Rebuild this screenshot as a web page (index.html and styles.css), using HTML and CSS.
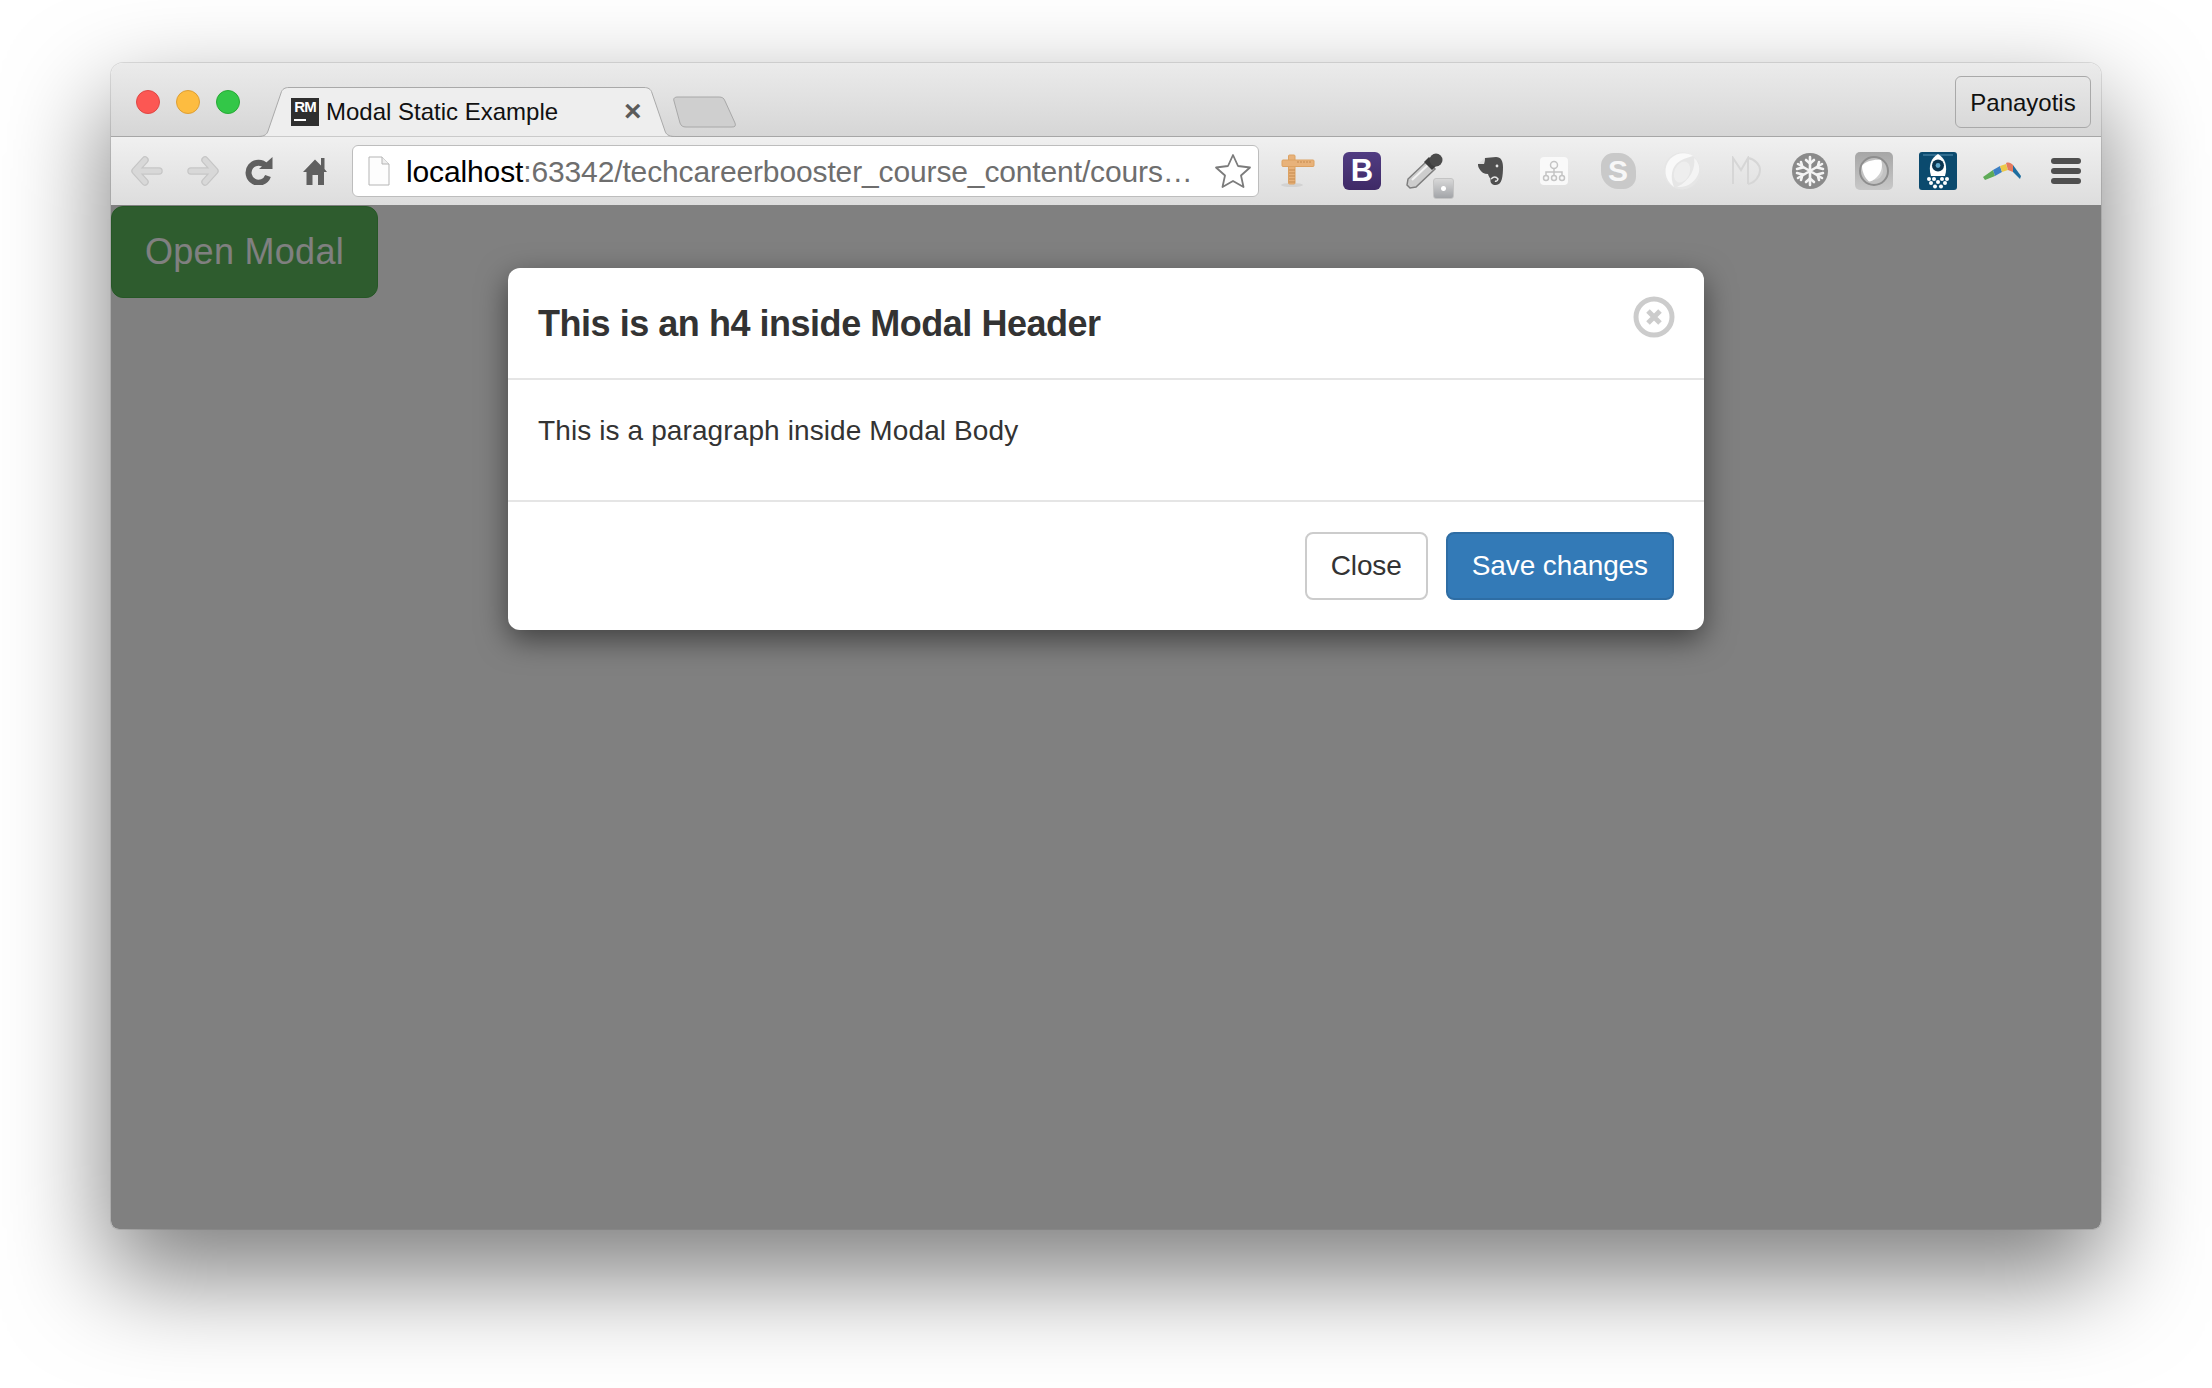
FILE: index.html
```html
<!DOCTYPE html>
<html lang="en">
<head>
    <meta charset="UTF-8">
    <meta name="viewport" content="width=device-width, initial-scale=1.0">
    <title>Modal Static Example</title>
    <link rel="stylesheet" href="styles.css">
</head>
<body>
    <div class="window">
        <div class="tabstrip">
            <div class="lights">
                <span class="light light-red"></span>
                <span class="light light-yellow"></span>
                <span class="light light-green"></span>
            </div>
            <div class="tab">
                <svg class="tab-shape" viewBox="0 0 417 50" preserveAspectRatio="none">
                    <path d="M0 49.5 C7 49.5 9 47 10 44 L23 6 C24 2 27 .5 31 .5 L386 .5 C390 .5 393 2 394 6 L407 44 C408 47 410 49.5 417 49.5" fill="#eeeeee" stroke="#a9a9a9"/>
                </svg>
                <span class="favicon"><span class="favicon-text">RM</span><span class="favicon-bar"></span></span>
                <span class="tab-title">Modal Static Example</span>
                <span class="tab-close">×</span>
            </div>
            <svg class="newtab" width="64" height="32" viewBox="0 0 64 32">
                <path d="M1 5 C0 2 2 1 5 1 L46 1 C49 1 51 2 52 5 L62 27 C63 30 62 31 59 31 L13 31 C10 31 8 30 7 27 Z" fill="#cfcfcf" stroke="#a8a8a8"/>
            </svg>
            <div class="profile">Panayotis</div>
        </div>

        <div class="toolbar">
            <div class="nav-slot">
                <svg width="32" height="30" viewBox="0 0 32 30"><path d="M14 4 L4 15 L14 26 M5 15 L28 15" fill="none" stroke="#c6c6c6" stroke-width="7.500" stroke-linecap="round" stroke-linejoin="round"/><path d="M14 4 L4 15 L14 26 M5 15 L28 15" fill="none" stroke="#d8d8d8" stroke-width="5" stroke-linecap="round" stroke-linejoin="round"/></svg>
            </div>
            <div class="nav-slot">
                <svg width="32" height="30" viewBox="0 0 32 30"><path d="M18 4 L28 15 L18 26 M27 15 L4 15" fill="none" stroke="#c6c6c6" stroke-width="7.500" stroke-linecap="round" stroke-linejoin="round"/><path d="M18 4 L28 15 L18 26 M27 15 L4 15" fill="none" stroke="#d8d8d8" stroke-width="5" stroke-linecap="round" stroke-linejoin="round"/></svg>
            </div>
            <div class="nav-slot">
                <svg width="28" height="28" viewBox="0 0 28 28"><path d="M21 9 A10 10 0 1 0 23 19" fill="none" stroke="#5f5f5f" stroke-width="6"/><path d="M14 12 L27.500 12 L27.500 0 Z" fill="#5f5f5f"/></svg>
            </div>
            <div class="nav-slot">
                <svg width="24" height="27" viewBox="0 0 24 27"><path d="M12 1.500 L18 7.500 L18 0 L21.500 0 L21.500 11 L24 14 L21 14 L21 27 L15 27 L15 17 L9.500 17 L9.500 27 L3.500 27 L3.500 14 L0 14 Z" fill="#5f5f5f"/></svg>
            </div>

            <div class="omnibox">
                <svg class="doc-icon" width="22" height="30" viewBox="0 0 22 30"><path d="M1 1 L14 1 L21 8 L21 29 L1 29 Z" fill="#fdfdfd" stroke="#b5b5b5"/><path d="M14 1 L14 8 L21 8" fill="#eeeeee" stroke="#b5b5b5"/></svg>
                <span class="url"><span class="url-host">localhost</span>:63342/techcareerbooster_course_content/cours…</span>
                <svg class="star" width="38" height="36" viewBox="0 0 38 36"><path d="M19 2 L24 13 L36 14.5 L27 22.500 L29.500 34 L19 28 L8.500 34 L11 22.500 L2 14.500 L14 13 Z" fill="#ffffff" stroke="#7c7c7c" stroke-width="1.800" stroke-linejoin="round"/></svg>
            </div>

            <div class="ext-slot">
                <svg width="34" height="34" viewBox="0 0 34 34"><ellipse cx="11" cy="31" rx="11" ry="2" fill="#d2d2d2"/><rect x="7.500" y="1" width="6.500" height="29" rx="1" fill="#e8b27a" stroke="#dca263"/><rect x="1" y="6" width="32" height="6.500" rx="1" fill="#e8b27a" stroke="#dca263"/><path d="M8 16h6M8 19h6M8 22h6M8 25h6M8 28h6M17 9v-2M20 9v-2M23 9v-2M26 9v-2M29 9v-2" stroke="#c58a4e"/></svg>
            </div>
            <div class="ext-slot">
                <span class="bootstrap-icon">B</span>
            </div>
            <div class="ext-slot ext-dropper">
                <svg width="38" height="36" viewBox="0 0 38 36"><path d="M1 32 L2 26 L21 8 L29 16 L10 34 L4 35 Z" fill="#cdcdcd" stroke="#7e7e7e" stroke-width="1.500"/><path d="M6 27 L22 12" stroke="#f2f2f2" stroke-width="2"/><path d="M18 9 L23 4 L31 12 L26 17 Z" fill="#3e3e3e"/><circle cx="30" cy="7" r="6.500" fill="#4a4a4a"/></svg>
                <span class="dropper-badge"></span>
            </div>
            <div class="ext-slot">
                <svg width="25" height="28" viewBox="0 0 25 28"><path d="M7 1 L18 0 C23 0 25 4 25 10 C25 19 24 28 18 28 C14 28 12 26 12.500 22 C11 20 10.500 18.500 10 17 C6 17 3 15 1.500 12 C0 10 0 8 0 7 L6 7 Z" fill="#4f4f4f"/><path d="M7 1 L0 7 L6 7 Z" fill="#dddddd"/><circle cx="19" cy="9" r="1.400" fill="#e6e6e6"/><path d="M13 22 Q17 18 20 22 Q19 25 17 24" fill="none" stroke="#e6e6e6" stroke-width="1.400"/></svg>
            </div>
            <div class="ext-slot">
                <svg width="28" height="28" viewBox="0 0 28 28"><rect width="28" height="28" rx="4" fill="#f9f9f9"/><g fill="none" stroke="#c4c4c4" stroke-width="1.500"><circle cx="14" cy="8" r="3.500"/><circle cx="6" cy="21" r="2.500"/><circle cx="14" cy="21" r="2.500"/><circle cx="22" cy="21" r="2.500"/><path d="M14 12v7M6 18v-3h16v3"/></g></svg>
            </div>
            <div class="ext-slot">
                <span class="skype-icon">S</span>
            </div>
            <div class="ext-slot">
                <svg width="38" height="38" viewBox="0 0 38 38"><circle cx="19" cy="19" r="18.500" fill="#e6e6e6"/><ellipse cx="19" cy="20" rx="7.500" ry="11" transform="rotate(25 19 20)" fill="#eeeeee"/><path d="M30 4 C24 0 14 0 7 7 C0 15 1 28 11 35 C7 26 8 14 17 9 C22 6 27 5 30 4 Z" fill="#f9f9f9"/><path d="M14 35 C24 36 33 30 36 20 C37 14 35 9 31 6 C33 16 27 29 14 35 Z" fill="#f4f4f4"/></svg>
            </div>
            <div class="ext-slot">
                <svg width="30" height="30" viewBox="0 0 30 30"><path d="M2 28 L2 2 L10 14 L17 2 L17 28 M17 2 C24 3 29 9 29 14 C29 20 24 27 17 28" fill="none" stroke="#d6d6d6" stroke-width="2"/></svg>
            </div>
            <div class="ext-slot">
                <svg width="36" height="36" viewBox="0 0 36 36"><circle cx="18" cy="18" r="18" fill="#8a8a8a"/><g stroke="#f4f4f4" stroke-width="2.600" stroke-linecap="round" fill="none"><path d="M18 4 V32 M6 11 L30 25 M6 25 L30 11"/><path d="M14 7 L18 10.500 L22 7 M14 29 L18 25.500 L22 29 M5 16 L10.500 14.500 L9 9 M31 16 L25.500 14.500 L27 9 M5 20 L10.500 21.500 L9 27 M31 20 L25.500 21.500 L27 27"/></g></svg>
            </div>
            <div class="ext-slot">
                <svg width="38" height="38" viewBox="0 0 38 38"><defs><linearGradient id="shield-bg" x1="0" y1="0" x2="0" y2="1"><stop offset="0" stop-color="#a6a6a6"/><stop offset="1" stop-color="#c8c8c8"/></linearGradient></defs><rect width="38" height="38" rx="5" fill="url(#shield-bg)"/><circle cx="19" cy="19" r="14" fill="#c2c2c2" stroke="#8e8e8e" stroke-width="2"/><circle cx="19" cy="19" r="9" fill="#d0d0d0"/><path d="M7 14 C10 9 20 7 26 8 C28 13 27 20 22 25 C19 28 16 29.500 14 29.500 C10 26 7 20 7 14 Z" fill="#ffffff"/></svg>
            </div>
            <div class="ext-slot">
                <svg width="38" height="38" viewBox="0 0 38 38"><rect width="38" height="38" rx="3" fill="#0b4a6e"/><path d="M4 3h30" stroke="#3e7a9c" stroke-width="1.500"/><path d="M19 2 C26 6 29 14 26 24 L12 24 C9 14 12 6 19 2 Z" fill="#ffffff"/><circle cx="19" cy="13.500" r="6" fill="#0b3550"/><circle cx="19" cy="13.500" r="2.400" fill="#5fa7cb"/><g fill="#ffffff"><circle cx="10" cy="27" r="2"/><circle cx="15" cy="27" r="2"/><circle cx="23" cy="27" r="2"/><circle cx="28" cy="27" r="2"/><circle cx="12" cy="31" r="2"/><circle cx="19" cy="30" r="2"/><circle cx="26" cy="31" r="2"/><circle cx="16" cy="34.500" r="2"/><circle cx="22" cy="34.500" r="2"/></g></svg>
            </div>
            <div class="ext-slot">
                <svg width="40" height="20" viewBox="0 0 40 20"><path d="M1 16 L11 9 L13 15 L3 19 Z" fill="#5eab57"/><path d="M11 9 L18 5 L20 11 L13 15 Z" fill="#3c7fc4"/><path d="M18 5 L24 3 L26 9 L20 11 Z" fill="#ecc94a"/><path d="M24 2 C27 1 29 2 31 4 L31 11 L26 9 Z" fill="#e57a5f"/><path d="M31 4 L39 15 L38 18 L31 11 Z" fill="#1d6d9f"/></svg>
            </div>
            <div class="ext-slot">
                <span class="menu-icon"><span></span><span></span><span></span></span>
            </div>
        </div>

        <div class="content">
            <a class="open-btn">Open Modal</a>

            <div class="backdrop">
                <div class="modal">
                    <div class="modal-header">
                        <h4>This is an h4 inside Modal Header</h4>
                        <svg class="modal-close" width="42" height="42" viewBox="0 0 42 42"><circle cx="21" cy="21" r="18" fill="none" stroke="#cccccc" stroke-width="5"/><path d="M15 15 L27 27 M27 15 L15 27" stroke="#cccccc" stroke-width="5"/></svg>
                    </div>
                    <div class="modal-body">
                        <p>This is a paragraph inside Modal Body</p>
                    </div>
                    <div class="modal-footer">
                        <a class="btn btn-default">Close</a>
                        <a class="btn btn-primary">Save changes</a>
                    </div>
                </div>
            </div>
        </div>
    </div>
</body>
</html>
```

FILE: styles.css
```css
html, body {
    height: 100%;
}
body {
    margin: 0;
    background: #ffffff;
    font-family: "Liberation Sans", Arial, sans-serif;
    overflow: hidden;
    padding: 63px 111px 0;
    box-sizing: border-box;
}

.window {
    width: 1990px;
    height: 1166px;
    display: flex;
    flex-direction: column;
    border-radius: 12px 12px 8px 8px;
    box-shadow: 0 44px 100px 4px rgba(0, 0, 0, 0.5), 0 0 0 1px rgba(0, 0, 0, 0.1);
    overflow: hidden;
}

/* tab strip */
.tabstrip {
    height: 73px;
    flex: none;
    display: flex;
    align-items: flex-end;
    background: linear-gradient(#ebebeb, #d6d6d6);
    border-top: 1px solid #c4c4c4;
    border-bottom: 1px solid #a6a6a6;
    box-sizing: content-box;
    margin-top: -1px;
}
.lights {
    align-self: flex-start;
    display: flex;
    gap: 16px;
    margin: 27px 0 0 25px;
}
.light {
    width: 24px;
    height: 24px;
    border-radius: 50%;
    box-sizing: border-box;
}
.light-red { background: #fc5753; border: 1px solid #df4744; }
.light-yellow { background: #fdbc40; border: 1px solid #de9f34; }
.light-green { background: #33c748; border: 1px solid #27aa35; }

.tab {
    position: relative;
    width: 417px;
    height: 50px;
    margin: 0 0 -1px 18px;
    display: flex;
    align-items: center;
    padding-left: 33px;
    box-sizing: border-box;
}
.tab-shape {
    position: absolute;
    left: 0;
    top: 0;
    width: 100%;
    height: 100%;
}
.favicon {
    position: relative;
    flex: none;
    width: 28px;
    height: 28px;
    background: #2f2f2f;
    color: #ffffff;
    margin-top: -1px;
}
.favicon-text {
    display: block;
    font-size: 15px;
    font-weight: 700;
    line-height: 17px;
    letter-spacing: -1px;
    text-align: center;
}
.favicon-bar {
    display: block;
    width: 12px;
    height: 2px;
    background: #ffffff;
    margin: 4px 0 0 3px;
}
.tab-title {
    position: relative;
    font-size: 24px;
    color: #111111;
    margin-left: 7px;
    white-space: nowrap;
    margin-top: -1px;
}
.tab-close {
    position: absolute;
    left: 366px;
    top: 8px;
    font-size: 30px;
    line-height: 32px;
    font-weight: 700;
    color: #5a5a5a;
}
.newtab {
    flex: none;
    margin: 0 0 8px -2px;
}
.profile {
    align-self: flex-start;
    margin: 13px 10px 0 auto;
    width: 136px;
    height: 52px;
    line-height: 52px;
    text-align: center;
    font-size: 24px;
    color: #111111;
    border: 1px solid #a9a9a9;
    border-radius: 6px;
    box-sizing: border-box;
}

/* toolbar */
.toolbar {
    height: 68px;
    flex: none;
    display: flex;
    align-items: center;
    padding-left: 8px;
    background: linear-gradient(#f0f0f0, #dddddd);
    box-sizing: border-box;
}
.nav-slot {
    width: 56px;
    flex: none;
    display: flex;
    justify-content: center;
}
.omnibox {
    width: 907px;
    height: 52px;
    flex: none;
    margin: 0 7px 0 9px;
    display: flex;
    align-items: center;
    background: #ffffff;
    border: 1px solid #bdbdbd;
    border-radius: 6px;
    box-sizing: border-box;
}
.doc-icon {
    flex: none;
    margin-left: 15px;
}
.url {
    margin: 2px 0 0 16px;
    font-size: 30px;
    letter-spacing: -0.13px;
    color: #6e6e6e;
    white-space: nowrap;
    flex: 1;
}
.url-host {
    color: #000000;
}
.star {
    flex: none;
    margin-right: 6px;
}
.ext-slot {
    position: relative;
    width: 64px;
    height: 40px;
    flex: none;
    display: flex;
    align-items: center;
    justify-content: center;
}
.bootstrap-icon {
    width: 38px;
    height: 38px;
    border-radius: 6px;
    background: linear-gradient(#513c82, #3f2a66);
    color: #ffffff;
    font-size: 31px;
    font-weight: 700;
    line-height: 38px;
    text-align: center;
}
.ext-dropper svg {
    margin-left: -2px;
}
.dropper-badge {
    position: absolute;
    left: 39px;
    top: 27px;
    width: 21px;
    height: 21px;
    border-radius: 3px;
    background: radial-gradient(circle, #ffffff 2px, transparent 3px), linear-gradient(#d8d8d8, #a2a4a8);
    border: 1px solid #c4c4c4;
    box-sizing: border-box;
}
.skype-icon {
    width: 35px;
    height: 36px;
    border-radius: 35% 50% 35% 50%;
    background: #c9c9c9;
    color: #f7f7f7;
    font-size: 30px;
    font-weight: 700;
    line-height: 36px;
    text-align: center;
}
.menu-icon {
    display: flex;
    flex-direction: column;
    gap: 4px;
    width: 30px;
}
.menu-icon span {
    height: 6px;
    border-radius: 3px;
    background: #4f4f4f;
}

/* page inside the window */
.content {
    position: relative;
    flex: 1;
    background: #ffffff;
}
.open-btn {
    display: inline-block;
    width: 267px;
    height: 92px;
    margin-top: 1px;
    line-height: 90px;
    text-align: center;
    font-size: 36px;
    letter-spacing: 0.3px;
    color: #ffffff;
    background: #5cb85c;
    border: 1px solid #4cae4c;
    border-radius: 12px;
    box-sizing: border-box;
}
.backdrop {
    position: absolute;
    left: 0;
    top: 0;
    right: 0;
    bottom: 0;
    background: rgba(0, 0, 0, 0.497);
    display: flex;
    justify-content: center;
    align-items: flex-start;
}
.modal {
    width: 1196px;
    margin-top: 63px;
    background: #ffffff;
    border-radius: 12px;
    box-shadow: 0 10px 30px rgba(0, 0, 0, 0.5);
}
.modal-header {
    height: 112px;
    padding: 0 30px;
    display: flex;
    justify-content: space-between;
    align-items: flex-start;
    border-bottom: 2px solid #e5e5e5;
    box-sizing: border-box;
}
.modal-header h4 {
    margin: 36px 0 0;
    font-size: 36px;
    line-height: 40px;
    font-weight: 700;
    letter-spacing: -0.47px;
    color: #333333;
}
.modal-close {
    margin: 28px -1px 0 0;
}
.modal-body {
    height: 122px;
    padding: 0 30px;
    border-bottom: 2px solid #e5e5e5;
    box-sizing: border-box;
}
.modal-body p {
    margin: 0;
    padding-top: 31px;
    font-size: 28px;
    line-height: 40px;
    letter-spacing: 0.11px;
    color: #333333;
}
.modal-footer {
    height: 128px;
    padding: 30px 30px 0;
    display: flex;
    justify-content: flex-end;
    gap: 18px;
    box-sizing: border-box;
}
.btn {
    height: 68px;
    line-height: 64px;
    padding: 0 24px;
    font-size: 28px;
    letter-spacing: -0.1px;
    border-radius: 8px;
    border: 2px solid transparent;
    box-sizing: border-box;
}
.btn-default {
    color: #333333;
    background: #ffffff;
    border-color: #cccccc;
}
.btn-primary {
    color: #ffffff;
    background: #337ab7;
    border-color: #2e6da4;
}
```
